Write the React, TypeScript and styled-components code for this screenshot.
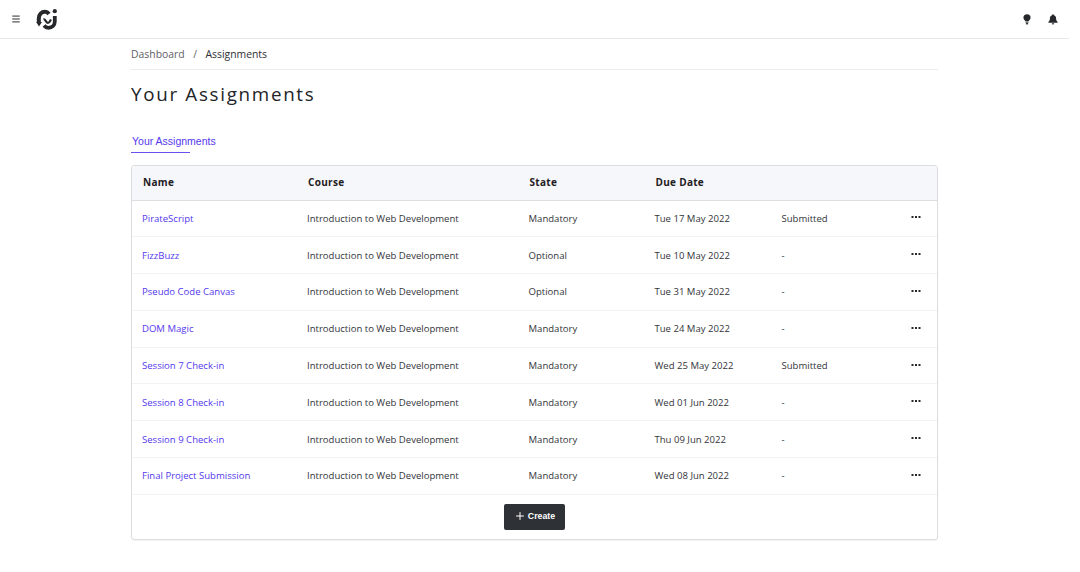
import React from "react";
import styled, { createGlobalStyle } from "styled-components";
import { Menu, Plus } from "lucide-react";

const Global = createGlobalStyle`
  html, body { margin: 0; padding: 0; background: #fff; }
  body { font-family: "Open Sans", "Noto Sans", sans-serif; color: #2d2f33; width: 1080px; height: 572px; overflow: hidden; }
`;
const Page = styled.div`width: 1069px;`;
const TopBar = styled.header`
  height: 38px; border-bottom: 1px solid #e8e8e8; display: flex; align-items: center;
  padding: 0 11px; gap: 15px;
`;
const IconBtn = styled.span`display: flex; color: #2b2d30;`;
const Spacer = styled.div`flex: 1;`;
const RightIcons = styled.div`display: flex; gap: 17px; align-items: center;`;
const Main = styled.main`width: 807px; margin-left: 131px;`;
const Crumbs = styled.nav`
  height: 30px; border-bottom: 1px solid #ececec; display: flex; align-items: center;
  font-size: 10.4px; gap: 8.5px;
`;
const CrumbLink = styled.span`color: #5f6166;`;
const CrumbCurrent = styled.span`color: #2d2f33;`;
const Title = styled.h1`
  margin: 9px 0 0; font-size: 18.8px; font-weight: 400; line-height: 30px; letter-spacing: 1.7px; color: #222428;
`;
const Tabs = styled.div`margin-top: 24px; display: flex;`;
const Tab = styled.div`
  font-family: "Liberation Sans", Arial, sans-serif; font-size: 10.5px; color: #5438ee;
  width: 58px; white-space: nowrap; padding: 0 0 3px 1px; line-height: 16px; border-bottom: 1px solid #6a4ff0;
`;
const Card = styled.section`
  margin-top: 12px; border: 1px solid #dcdde0; border-radius: 3px; overflow: hidden;
  box-shadow: 0 1px 1px rgba(0,0,0,0.05); height: 375px; box-sizing: border-box;
`;
const Row = styled.div`
  display: grid; grid-template-columns: 165px 221.5px 126px 127px 130px 1fr; align-items: center;
  padding-left: 10px; font-size: 9.55px; box-sizing: border-box;
`;
const HeadRow = styled(Row)`
  height: 34.5px; padding-bottom: 1.5px; background: #f6f7fa; border-bottom: 1px solid #dcdde0;
  font-weight: 700; font-size: 10px; color: #1f2023; letter-spacing: 0.3px;
`;
const HeadCell = styled.div`padding-left: 1px;`;
const BodyRow = styled(Row)`
  height: 36.8px; border-bottom: 1px solid #f3f3f4; color: #33353a;
`;
const NameLink = styled.a`color: #5438ee; text-decoration: none;`;
const Dots = styled.svg`display: block; margin: -2px 0 0 -1px;`;
const Footer = styled.div`display: flex; justify-content: center; padding-top: 9px;`;
const CreateBtn = styled.button`
  width: 61px; height: 26px; background: #2e3236; color: #fff; border: 0; border-radius: 2px;
  font-family: "Liberation Sans", Arial, sans-serif; font-size: 8.8px; font-weight: 700;
  display: flex; align-items: center; justify-content: center; gap: 2px; padding: 0 0 1px;
`;

const rows = [
  ["PirateScript", "Mandatory", "Tue 17 May 2022", "Submitted"],
  ["FizzBuzz", "Optional", "Tue 10 May 2022", "-"],
  ["Pseudo Code Canvas", "Optional", "Tue 31 May 2022", "-"],
  ["DOM Magic", "Mandatory", "Tue 24 May 2022", "-"],
  ["Session 7 Check-in", "Mandatory", "Wed 25 May 2022", "Submitted"],
  ["Session 8 Check-in", "Mandatory", "Wed 01 Jun 2022", "-"],
  ["Session 9 Check-in", "Mandatory", "Thu 09 Jun 2022", "-"],
  ["Final Project Submission", "Mandatory", "Wed 08 Jun 2022", "-"],
];

const Logo = () => (
  <svg width="22" height="22" viewBox="0 0 22 22" fill="none">
    <path d="M2.8 15 V10.5 C2.8 6.5 5.5 3.8 9 3.8 C10.8 3.8 12 4.6 13 6" stroke="#26282b" strokeWidth="4" />
    <path d="M18.8 8 V13.5 C18.8 17.5 15.8 19.8 12.5 19.8 C10.5 19.8 9.2 19 8 17.5" stroke="#26282b" strokeWidth="3.8" />
    <path d="M0.2 14 L6 14 L3 18.6 Z" fill="#26282b" />
    <path d="M7.5 11.5 C9.5 10.8 10 15 12 15 C13.5 15 14 13 15 11.5" stroke="#26282b" strokeWidth="2.2" />
    <circle cx="18.8" cy="3.2" r="2.1" fill="#26282b" />
  </svg>
);

const Bulb = () => (
  <svg width="8" height="11" viewBox="0 0 9 12" fill="#26282b">
    <path d="M4.5 0 A4 4 0 0 1 8.5 4 C8.5 5.6 7.3 6.4 6.5 7.6 H2.5 C1.7 6.4 0.5 5.6 0.5 4 A4 4 0 0 1 4.5 0 Z" />
    <rect x="2.8" y="8.2" width="3.4" height="1.3" />
    <rect x="3.3" y="10" width="2.4" height="1.5" />
  </svg>
);

const Bell = () => (
  <svg width="10" height="11" viewBox="0 0 10 11" fill="#26282b">
    <path d="M5 0.2 C5.6 0.2 5.9 0.6 5.9 1.2 C7.6 1.7 8.1 3.1 8.1 4.6 C8.1 6.4 8.7 7.2 9.6 8 V8.7 H0.4 V8 C1.3 7.2 1.9 6.4 1.9 4.6 C1.9 3.1 2.4 1.7 4.1 1.2 C4.1 0.6 4.4 0.2 5 0.2 Z" />
    <path d="M3.8 9.3 H6.2 A1.2 1.2 0 0 1 3.8 9.3 Z" />
  </svg>
);

const MoreDots = () => (
  <Dots width="10" height="4" viewBox="0 0 10 4" fill="#26282b">
    <rect x="0.5" y="1" width="2" height="2" />
    <rect x="4" y="1" width="2" height="2" />
    <rect x="7.5" y="1" width="2" height="2" />
  </Dots>
);

export default function App() {
  return (
    <Page>
      <Global />
      <TopBar>
        <IconBtn><Menu size={10} strokeWidth={2.4} /></IconBtn>
        <Logo />
        <Spacer />
        <RightIcons>
          <IconBtn><Bulb /></IconBtn>
          <IconBtn><Bell /></IconBtn>
        </RightIcons>
      </TopBar>
      <Main>
        <Crumbs>
          <CrumbLink>Dashboard</CrumbLink>
          <CrumbLink>/</CrumbLink>
          <CrumbCurrent>Assignments</CrumbCurrent>
        </Crumbs>
        <Title>Your Assignments</Title>
        <Tabs><Tab>Your Assignments</Tab></Tabs>
        <Card>
          <HeadRow>
            <HeadCell>Name</HeadCell>
            <HeadCell>Course</HeadCell>
            <HeadCell>State</HeadCell>
            <HeadCell>Due Date</HeadCell>
          </HeadRow>
          {rows.map((r) => (
            <BodyRow key={r[0]}>
              <NameLink href="#">{r[0]}</NameLink>
              <div>Introduction to Web Development</div>
              <div>{r[1]}</div>
              <div>{r[2]}</div>
              <div>{r[3]}</div>
              <MoreDots />
            </BodyRow>
          ))}
          <Footer>
            <CreateBtn><Plus size={12} strokeWidth={2} />Create</CreateBtn>
          </Footer>
        </Card>
      </Main>
    </Page>
  );
}
